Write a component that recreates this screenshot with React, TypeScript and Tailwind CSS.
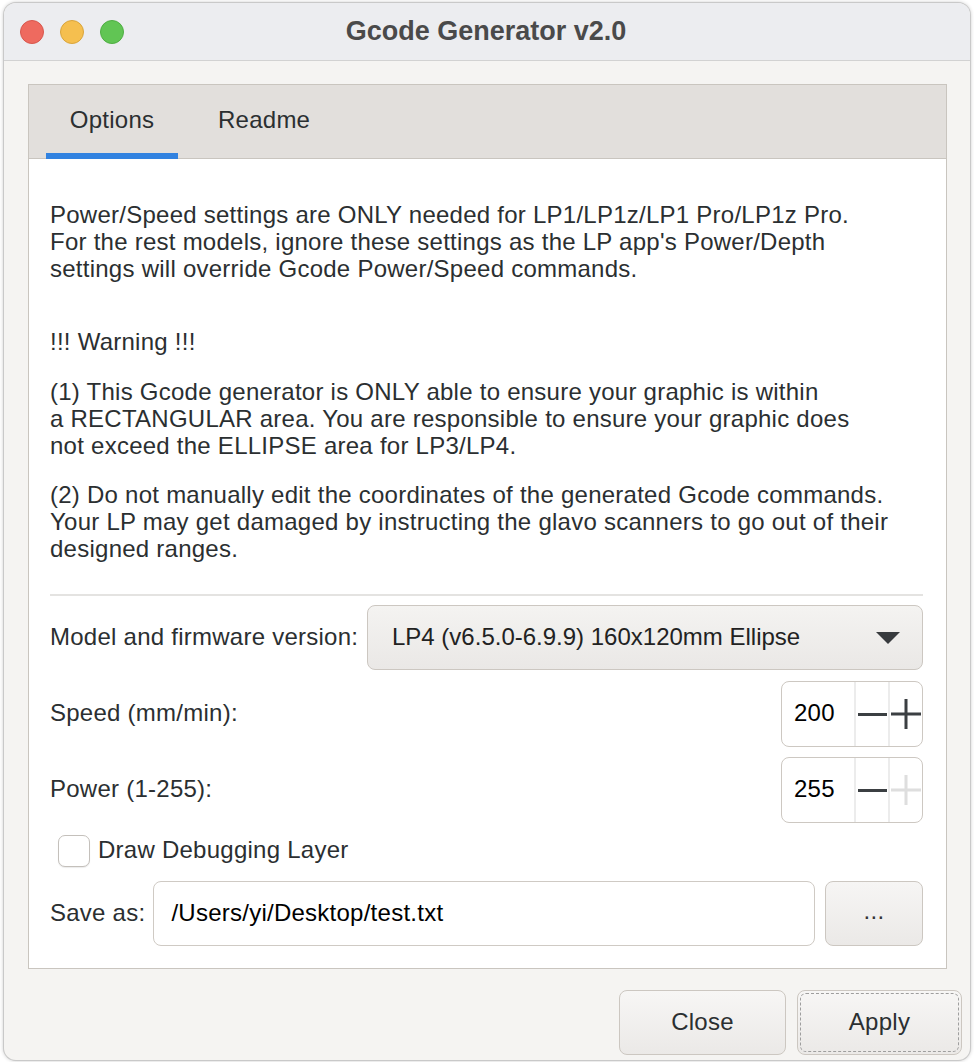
import React from "react";

const FONT = "font-['Liberation_Sans','Helvetica','Arial',sans-serif]";

function Spin({ value, plusDisabled }: { value: string; plusDisabled?: boolean }) {
  return (
    <div className="flex w-[142px] h-[66px] rounded-[8px] border border-[#cdc8c2] bg-white overflow-hidden">
      <div className="flex-1 flex items-center pl-[12px] pb-[3px] text-[24px] text-black">{value}</div>
      <div className="w-[34px] border-l-2 border-[#ececec] flex items-center justify-center">
        <div className="w-[29px] h-[3px] bg-[#3b3f42]" />
      </div>
      <div className="w-[34px] border-l-2 border-[#ececec] flex items-center justify-center">
        <svg width="30" height="30" viewBox="0 0 30 30">
          <rect x="0" y="13.5" width="30" height="3" fill={plusDisabled ? "#dedede" : "#3b3f42"} />
          <rect x="13.5" y="0" width="3" height="30" fill={plusDisabled ? "#dedede" : "#3b3f42"} />
        </svg>
      </div>
    </div>
  );
}

export default function App() {
  return (
    <div className={`w-[974px] h-[1062px] bg-white pt-[3px] pl-[4px] ${FONT}`}>
      <div className="w-[966px] h-[1057px] rounded-[12px] overflow-hidden flex flex-col bg-[#f5f4f2] shadow-[0_0_0_1px_#c9c9c9,0_0_4px_rgba(0,0,0,0.3)]">
        {/* Title bar */}
        <div className="h-[58px] shrink-0 bg-[#ecedf0] border-b border-[#d2d2d2] grid grid-cols-[1fr_auto_1fr] items-center">
          <div className="flex items-center gap-[16px] pl-[16px] pt-[1px]">
            <div className="w-[24px] h-[24px] rounded-full bg-[#ee6a5f] border border-[#d8574d]" />
            <div className="w-[24px] h-[24px] rounded-full bg-[#f5bf4f] border border-[#d9a53c]" />
            <div className="w-[24px] h-[24px] rounded-full bg-[#61c554] border border-[#4fae43]" />
          </div>
          <div className="text-[27px] font-bold text-[#4a4a4a] leading-none pb-[1px] pr-[2px]">Gcode Generator v2.0</div>
          <div />
        </div>

        {/* Body */}
        <div className="flex-1 flex flex-col pt-[23px] pl-[24px] pr-[23px] tracking-[0.25px]">
          <div className="w-[919px] h-[885px] border border-[#c9c5bf] bg-white flex flex-col">
            {/* Tabs header */}
            <div className="h-[74px] shrink-0 bg-[#e2dfdc] border-b border-[#c9c5bf] flex items-stretch">
              <div className="ml-[17px] w-[132px] border-b-[6px] border-[#3182e0] flex items-center justify-center pt-[2px] text-[24px] text-[#2b2f31] mb-[-1px]">
                Options
              </div>
              <div className="ml-[40px] flex items-center pb-[4px] text-[24px] text-[#2b2f31]">Readme</div>
            </div>

            {/* Content */}
            <div className="flex-1 flex flex-col pt-[42px] pl-[21px] pr-[23px] text-[24px] leading-[27px] text-[#2b2f31]">
              <p>
                Power/Speed settings are ONLY needed for LP1/LP1z/LP1 Pro/LP1z Pro.
                <br />
                For the rest models, ignore these settings as the LP app's Power/Depth
                <br />
                settings will override Gcode Power/Speed commands.
              </p>
              <p className="mt-[46px]">!!! Warning !!!</p>
              <p className="mt-[22.5px]">
                (1) This Gcode generator is ONLY able to ensure your graphic is within
                <br />
                a RECTANGULAR area. You are responsible to ensure your graphic does
                <br />
                not exceed the ELLIPSE area for LP3/LP4.
              </p>
              <p className="mt-[22px]">
                (2) Do not manually edit the coordinates of the generated Gcode commands.
                <br />
                Your LP may get damaged by instructing the glavo scanners to go out of their
                <br />
                designed ranges.
              </p>
              <div className="mt-[32px] h-[2px] bg-[#e4e3e1]" />

              {/* Model row */}
              <div className="mt-[9.5px] flex items-center justify-between">
                <span className="pb-[2px]">Model and firmware version:</span>
                <div className="w-[556px] h-[65px] rounded-[8px] border border-[#ccc7c1] bg-gradient-to-b from-[#f4f3f1] to-[#eae8e6] flex items-center pl-[24px] pr-[22px]">
                  <span className="flex-1 text-[#222] pb-[2px] tracking-[0px]">LP4 (v6.5.0-6.9.9) 160x120mm Ellipse</span>
                  <svg width="24" height="12" viewBox="0 0 24 12">
                    <path d="M0 0 L24 0 L12 12 Z" fill="#383b3e" />
                  </svg>
                </div>
              </div>

              {/* Speed row */}
              <div className="mt-[11px] flex items-center justify-between">
                <span className="pb-[3px]">Speed (mm/min):</span>
                <Spin value="200" />
              </div>

              {/* Power row */}
              <div className="mt-[10px] flex items-center justify-between">
                <span className="pb-[3px]">Power (1-255):</span>
                <Spin value="255" plusDisabled />
              </div>

              {/* Checkbox */}
              <div className="mt-[12px] flex items-center gap-[8px] pl-[8px]">
                <div className="w-[32px] h-[32px] rounded-[7px] border border-[#c4c0bb] bg-white shadow-[0_1px_1px_rgba(0,0,0,0.08)]" />
                <span className="pb-[3px]">Draw Debugging Layer</span>
              </div>

              {/* Save as */}
              <div className="mt-[14px] flex items-center gap-[8px]">
                <span className="whitespace-nowrap shrink-0 pb-[2px]">Save as:</span>
                <div className="flex-1 h-[65px] rounded-[8px] border border-[#cfcac4] bg-white flex items-center pl-[17px] pb-[2px] text-black">
                  /Users/yi/Desktop/test.txt
                </div>
                <div className="ml-[2px] w-[98px] h-[65px] rounded-[8px] border border-[#ccc7c1] bg-gradient-to-b from-[#f6f5f4] to-[#ebe9e7] flex items-center justify-center pb-[6px] text-[#333]">
                  ...
                </div>
              </div>
            </div>
          </div>

          {/* Bottom buttons */}
          <div className="mt-[21px] flex justify-end gap-[11px] mr-[-15px]">
            <div className="w-[167px] h-[65px] rounded-[8px] border border-[#ccc7c1] bg-gradient-to-b from-[#f7f6f5] to-[#ebe9e7] flex items-center justify-center pb-[2px] text-[24px] text-[#2b2f31]">
              Close
            </div>
            <div className="w-[165px] h-[65px] rounded-[8px] border border-[#ccc7c1] bg-gradient-to-b from-[#f7f6f5] to-[#ebe9e7] p-[2px]">
              <div className="w-full h-full rounded-[6px] border border-dashed border-[#9e9e9e] flex items-center justify-center pb-[2px] text-[24px] text-[#2b2f31]">
                Apply
              </div>
            </div>
          </div>
        </div>
      </div>
    </div>
  );
}
